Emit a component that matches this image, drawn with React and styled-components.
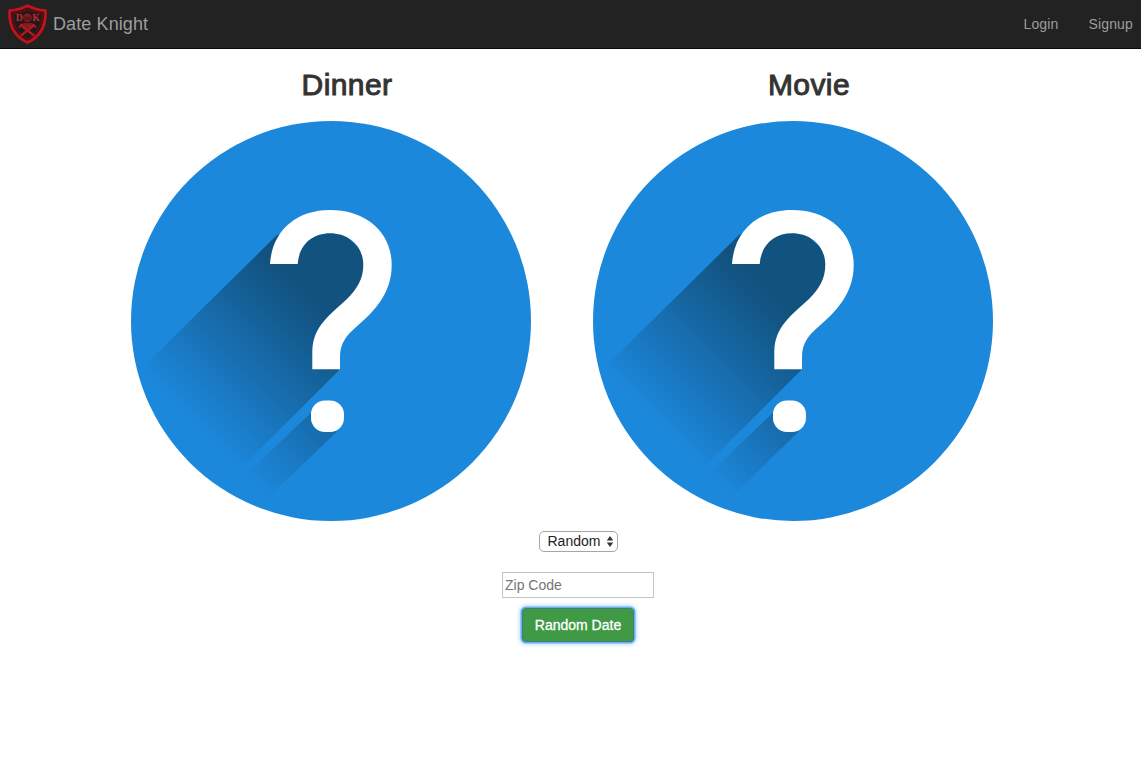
import React from "react";
import styled, { createGlobalStyle } from "styled-components";

const GlobalStyle = createGlobalStyle`
  html, body {
    margin: 0;
    padding: 0;
    background: #fff;
    color: #333;
    font-family: "Liberation Sans", Arial, sans-serif;
    font-size: 14px;
  }
`;

// navbar
const Navbar = styled.nav`
  display: flex;
  align-items: center;
  justify-content: space-between;
  height: 48px;
  background: #222;
  border-bottom: 1px solid #080808;
`;

const Brand = styled.a`
  display: flex;
  align-items: center;
  gap: 6px;
  padding-left: 8px;
  color: #9d9d9d;
  font-size: 18px;
  letter-spacing: 0.1px;
`;

const NavLinks = styled.div`
  display: flex;
  gap: 30px;
  padding-right: 8px;
`;

const NavLink = styled.a`
  color: #9d9d9d;
  font-size: 14px;
  letter-spacing: 0.15px;
`;

// main part
const Main = styled.main`
  display: flex;
  flex-direction: column;
  align-items: center;
  padding: 0 0 60px 15px;
`;

const Columns = styled.div`
  display: flex;
`;

const Column = styled.section`
  width: 462px;
  padding: 0 15px;
  box-sizing: border-box;
`;

const Title = styled.h2`
  margin: 19px 0 20px;
  font-size: 30px;
  line-height: 33px;
  font-weight: 400;
  letter-spacing: 0.4px;
  -webkit-text-stroke: 1px #333;
  text-align: center;
`;

const Art = styled.svg`
  display: block;
  width: 400px;
  height: 400px;
`;

const SelectWrap = styled.div`
  position: relative;
  width: 79px;
  height: 21px;
  margin-top: 10px;
`;

const Select = styled.select`
  appearance: none;
  display: block;
  box-sizing: border-box;
  width: 100%;
  height: 100%;
  padding: 0 0 2px 8px;
  background: #fff;
  border: 1px solid #a6a6a6;
  border-radius: 5px;
  color: #222;
  font: 14px "Liberation Sans", Arial, sans-serif;
`;

const SelectArrows = styled.svg`
  position: absolute;
  top: 4px;
  right: 4px;
  width: 8px;
  height: 13px;
  pointer-events: none;
`;

const ZipInput = styled.input`
  display: block;
  box-sizing: border-box;
  width: 152px;
  height: 26px;
  margin-top: 20px;
  padding: 0 2px;
  border: 1px solid #c4c4c4;
  outline: none;
  font: 14px "Liberation Sans", Arial, sans-serif;
  &::placeholder {
    color: #757575;
    opacity: 1;
  }
`;

const DateButton = styled.button`
  box-sizing: border-box;
  width: 112px;
  height: 34px;
  margin-top: 10px;
  padding: 0;
  background: #409a45;
  border: 1px solid #3a7f7a;
  border-radius: 4px;
  box-shadow: 0 0 0 1.5px #6aaef5, 0 0 4px 2px rgba(102, 175, 233, 0.6);
  color: #fff;
  font: 14px "Liberation Sans", Arial, sans-serif;
  -webkit-text-stroke: 0.3px #fff;
`;

function Logo() {
  return (
    <svg width="39" height="40" viewBox="0 0 40 42" preserveAspectRatio="none">
      <path
        d="M20 1.8 C26 5 32 6.5 38.2 7 C39.2 22 33 34 20 40.5 C7 34 .8 22 1.8 7 C8 6.5 14 5 20 1.8 Z"
        fill="#2a1416"
        stroke="#c4121c"
        strokeWidth="3"
      />
      <path
        d="M20 5.5 C25.5 8 30.5 9.5 35 10 C35.5 21 30.5 31 20 37 C9.5 31 4.5 21 5 10 C9.5 9.5 14.5 8 20 5.5 Z"
        fill="#221a1a"
        stroke="#7a0f14"
        strokeWidth="1"
      />
      <text x="8" y="18" fontSize="10" fontWeight="700" fontFamily="Liberation Serif, serif" fill="#c0282e">D</text>
      <text x="25" y="18" fontSize="10" fontWeight="700" fontFamily="Liberation Serif, serif" fill="#c0282e">K</text>
      <circle cx="20" cy="14.5" r="4.4" fill="#8a1a1f" />
      <path d="M16.5 14 H23.5 M17 16 H23" stroke="#2a1515" strokeWidth="0.8" />
      <path d="M15.5 20 H24.5 V25 H15.5 Z" fill="#8a1a1f" />
      <path d="M12.5 21.5 L27 33.5 M27.5 21.5 L13 33.5" stroke="#ab1c22" strokeWidth="2.6" />
      <path d="M11 25 L15 21 M29 25 L25 21" stroke="#ab1c22" strokeWidth="1.6" />
    </svg>
  );
}

// blue circle with the long shadow question mark
function QuestionArt({ id }) {
  return (
    <Art viewBox="0 0 400 400">
      <defs>
        <linearGradient id={id} gradientUnits="userSpaceOnUse" x1="205" y1="145" x2="54" y2="296">
          <stop offset="0" stopColor="#12527f" />
          <stop offset="0.2" stopColor="#12527f" />
          <stop offset="1" stopColor="#1c88dc" />
        </linearGradient>
        <clipPath id={id + "-clip"}>
          <circle cx="200" cy="200" r="200" />
        </clipPath>
      </defs>
      <circle cx="200" cy="200" r="200" fill="#1c88dc" />
      <g clipPath={`url(#${id}-clip)`}>
        <path
          d="M146 114 L199 100 L246 144 L230 184 L205 215 L209 248.3 L105 352 L10 248 Z"
          fill={`url(#${id})`}
        />
        <path d="M181 290.7 L205.7 310.7 L130 384 L108 360 Z" fill={`url(#${id})`} />
      </g>
      <path
        d="M139 143 H166.7 C168 124 181 112.3 199 112.3 C218 112.3 232.3 125 232.3 144 C232.3 158 226 168 216 178 C200 193 181.3 205 181.3 231 V248.3 H209 V236 C209 222 216 214 224 207 C244 190 260.7 172 260.7 144 C260.7 111 235 89 199 89 C164 89 141 111 139 143 Z"
        fill="#fff"
      />
      <rect x="180" y="279.5" width="33" height="31.5" rx="14" fill="#fff" />
    </Art>
  );
}

export default function App() {
  return (
    <>
      <GlobalStyle />
      <Navbar>
        <Brand>
          <Logo />
          Date Knight
        </Brand>
        <NavLinks>
          <NavLink>Login</NavLink>
          <NavLink>Signup</NavLink>
        </NavLinks>
      </Navbar>
      <Main>
        <Columns>
          <Column>
            <Title>Dinner</Title>
            <QuestionArt id="dinner-shade" />
          </Column>
          <Column>
            <Title>Movie</Title>
            <QuestionArt id="movie-shade" />
          </Column>
        </Columns>
        <SelectWrap>
          <Select defaultValue="random">
            <option value="random">Random</option>
          </Select>
          <SelectArrows viewBox="0 0 8 13">
            <path d="M4 1 L7.2 5.5 H.8 Z M4 12 L7.2 7.5 H.8 Z" fill="#333" />
          </SelectArrows>
        </SelectWrap>
        <ZipInput placeholder="Zip Code" />
        <DateButton>Random Date</DateButton>
      </Main>
    </>
  );
}
